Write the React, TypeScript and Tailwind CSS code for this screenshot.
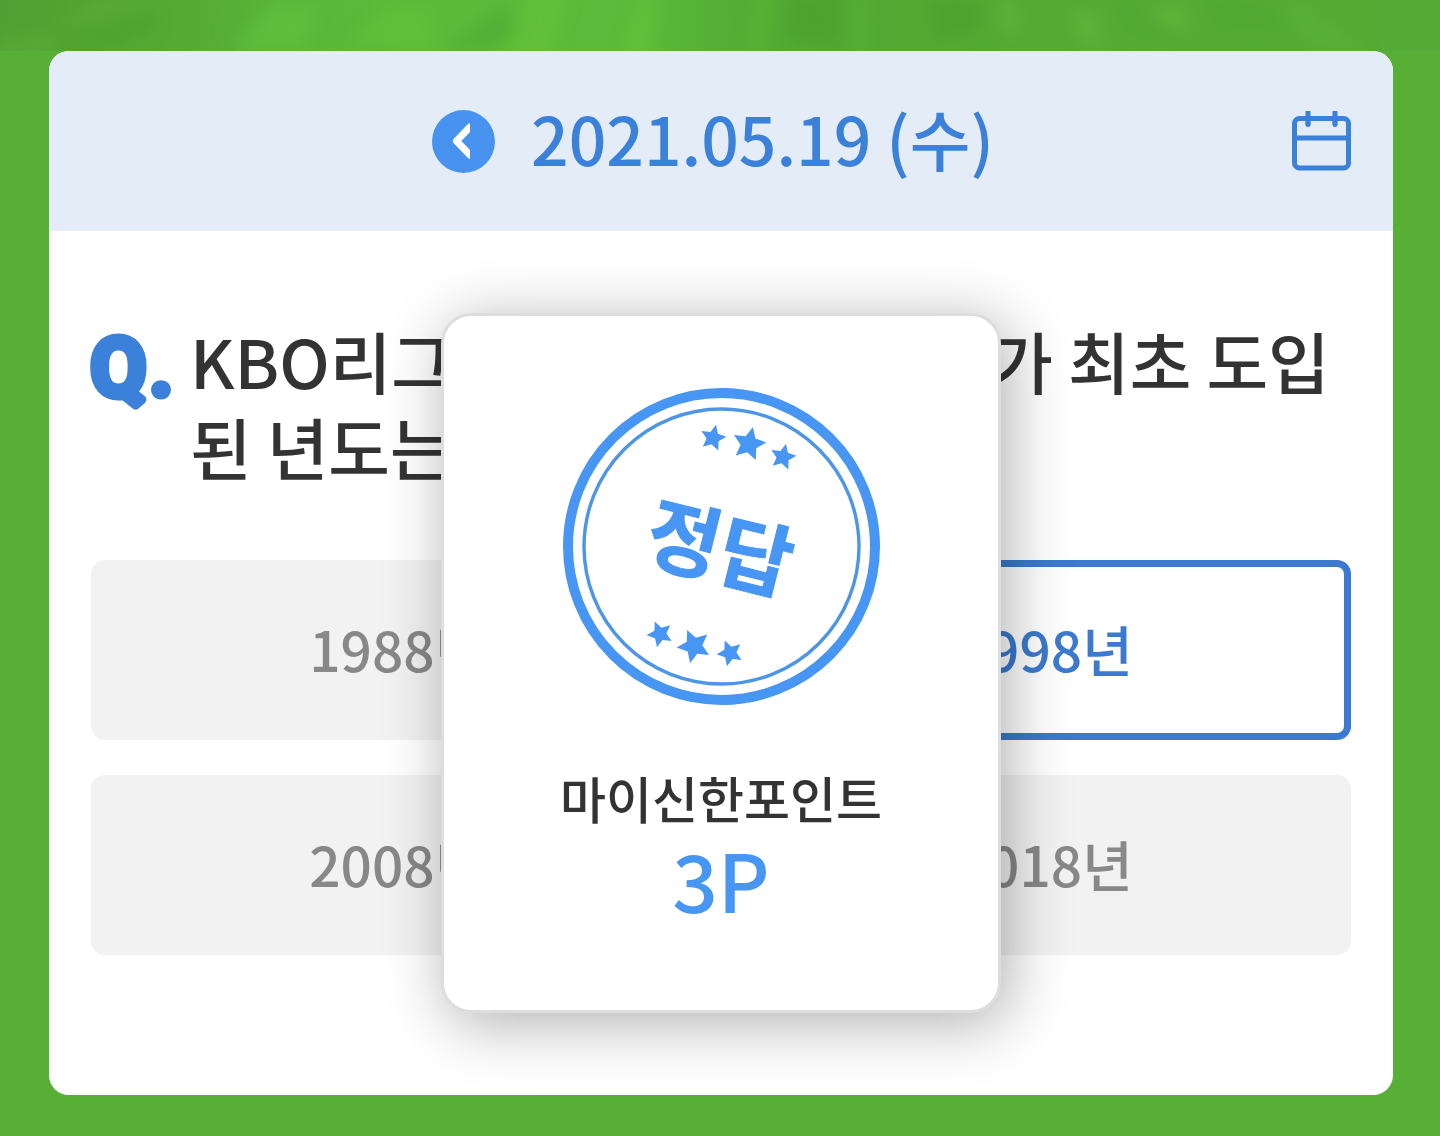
import { useState } from "react"

const options = ["1988년", "1998년", "2008년", "2018년"]

const starPoints = Array.from({ length: 10 }, (_, i) => {
  const r = i % 2 === 0 ? 1 : 0.48
  const a = (Math.PI / 5) * i - Math.PI / 2
  return `${(r * Math.cos(a)).toFixed(3)},${(r * Math.sin(a)).toFixed(3)}`
}).join(" ")

const stars = [
  { x: 150, y: 50, r: 13.5, angle: 13 },
  { x: 186, y: 56, r: 17.5, angle: 13 },
  { x: 220, y: 69, r: 13.5, angle: 13 },
  { x: 97, y: 246, r: 13.5, angle: 193 },
  { x: 131, y: 258, r: 17.5, angle: 193 },
  { x: 167, y: 265, r: 13.5, angle: 193 },
]

function GrassBackdrop() {
  return (
    <svg className="block h-[51px] w-full" viewBox="0 0 1440 51" preserveAspectRatio="none" aria-hidden="true">
      <defs>
        <linearGradient id="grass" x1="0" x2="1" y1="0" y2="0">
          <stop offset="0" stopColor="#4fa032" />
          <stop offset="0.12" stopColor="#54aa33" />
          <stop offset="0.2" stopColor="#5ab638" />
          <stop offset="0.3" stopColor="#5cba39" />
          <stop offset="0.44" stopColor="#5dba3a" />
          <stop offset="0.5" stopColor="#54af34" />
          <stop offset="0.58" stopColor="#50a832" />
          <stop offset="0.76" stopColor="#54ac34" />
          <stop offset="0.9" stopColor="#54ac34" />
          <stop offset="1" stopColor="#54aa35" />
        </linearGradient>
        <filter id="soft" x="-20%" y="-50%" width="140%" height="200%">
          <feGaussianBlur stdDeviation="8" />
        </filter>
      </defs>
      <rect width="1440" height="51" fill="url(#grass)" />
      <g filter="url(#soft)" opacity="0.85">
        <path d="M-10 60 L0 40 L50 35 L60 55 Z M50 30 L100 0 L150 5 L90 20 Z" fill="#5cab37" />
        <path d="M85 30 L150 10 L160 25 L90 51 Z" fill="#4da332" />
        <path d="M235 51 L270 5 L320 5 L300 51 Z" fill="#61bf3c" />
        <path d="M350 45 L385 5 L435 10 L430 55 Z" fill="#61bf3b" />
        <path d="M225 30 L245 0 L255 0 L228 40 Z M440 51 L500 5 L520 20 L500 51 Z" fill="#53af34" />
        <path d="M505 60 L525 -5 L570 -5 L550 60 Z M620 60 L640 -5 L655 -5 L650 60 Z" fill="#64c03b" />
        <path d="M745 60 L755 -5 L770 -5 L765 60 Z M852 60 L850 -5 L864 -5 L866 60 Z" fill="#59b335" />
        <path d="M785 40 L790 -5 L840 -5 L845 40 Z M935 40 L930 0 L980 0 L980 30 Z" fill="#4ba22f" />
        <path d="M1000 0 L1015 0 L1020 35 L1000 30 Z M1070 10 L1095 15 L1102 48 L1080 40 Z M1145 10 L1185 5 L1190 30 L1170 30 Z" fill="#61b437" />
        <path d="M1110 0 L1130 0 L1180 40 L1130 35 Z M1200 0 L1270 5 L1290 30 L1220 30 Z" fill="#4fa832" />
        <path d="M1280 10 L1300 5 L1370 51 L1320 51 Z" fill="#58b138" />
      </g>
    </svg>
  )
}

function CalendarIcon() {
  return (
    <svg className="block h-[60px] w-[60px]" viewBox="-1 0 60 60" fill="none" stroke="#3b80d9" strokeWidth="5" aria-hidden="true">
      <rect x="2.5" y="7.5" width="54" height="49.5" rx="5" />
      <path d="M2.5 27 H56.5" />
      <path d="M16 0 V13.5 M43 0 V13.5" />
      <path d="M16 12 V13.5 M43 12 V13.5" strokeLinecap="round" />
    </svg>
  )
}

function PrevIcon() {
  return (
    <svg className="block h-[63px] w-[63px]" viewBox="0 0 63 63" aria-hidden="true">
      <defs>
        <clipPath id="prevClip">
          <rect width="38" height="63" />
        </clipPath>
      </defs>
      <circle cx="31.5" cy="31.5" r="31.5" fill="#4793ef" />
      <path d="M38 17 L24.5 31 L38 45" fill="none" stroke="#fff" strokeWidth="7" strokeLinejoin="round" strokeLinecap="round" clipPath="url(#prevClip)" />
    </svg>
  )
}

function QuestionMark() {
  return (
    <svg className="mt-3 block h-[100px] w-[99px] shrink-0 overflow-visible" viewBox="0 0 99 100" role="img" aria-label="Q.">
      <text
        x="0"
        y="66"
        fill="#3b80d9"
        stroke="#3b80d9"
        strokeWidth="9"
        strokeLinejoin="round"
        className="font-['Roboto',sans-serif] text-[80px] font-medium"
      >
        Q
        <tspan dx="4">.</tspan>
      </text>
    </svg>
  )
}

function Stamp() {
  return (
    <svg className="block h-[317px] w-[317px]" viewBox="0 0 317 317" role="img" aria-label="정답">
      <circle cx="158.5" cy="158.5" r="153.5" fill="none" stroke="#4896f3" strokeWidth="10" />
      <circle cx="158.5" cy="158.5" r="137.5" fill="none" stroke="#4d95e6" strokeWidth="3.4" />
      {stars.map((s) => (
        <polygon
          key={`${s.x}-${s.y}`}
          points={starPoints}
          fill="#4896f3"
          transform={`translate(${s.x} ${s.y}) rotate(${s.angle}) scale(${s.r})`}
        />
      ))}
      <text
        x="157"
        y="190"
        textAnchor="middle"
        transform="rotate(14 157 160)"
        fill="#4896f3"
        stroke="#4896f3"
        strokeWidth="1"
        className="font-['Noto_Sans_CJK_KR',sans-serif] text-[80px] font-bold"
      >
        정답
      </text>
    </svg>
  )
}

export default function App() {
  const [selected, setSelected] = useState("1998년")

  return (
    <div className="min-h-screen bg-[#58af36] font-['Noto_Sans_CJK_KR',sans-serif] font-medium">
      <GrassBackdrop />
      <main className="relative mr-[47px] ml-[49px] overflow-hidden rounded-[20px] bg-white">
        <header className="grid h-[180px] grid-cols-[1fr_auto_1fr] items-center bg-[#e4ecf8] px-[42px]">
          <div className="col-start-2 flex items-center gap-9 pr-4">
            <button type="button" aria-label="이전 날짜">
              <PrevIcon />
            </button>
            <h1 className="pb-2 text-[66px] leading-[100px] text-[#3b80d9]">2021.05.19 (수)</h1>
          </div>
          <button type="button" aria-label="달력" className="justify-self-end">
            <CalendarIcon />
          </button>
        </header>

        <section className="px-[42px] pt-[86px] pb-[140px]">
          <div className="flex">
            <QuestionMark />
            <h2 className="text-[67px] leading-[86px] break-all text-[#333]">
              KBO리그에 외국인 선수 제도가 최초 도입된 년도는?
            </h2>
          </div>
          <div className="mt-[71px] grid grid-cols-2 gap-[35px]">
            {options.map((option) => (
              <button
                key={option}
                type="button"
                aria-pressed={selected === option}
                onClick={() => setSelected(option)}
                className={
                  selected === option
                    ? "h-[180px] rounded-[14px] border-[7px] border-[#3b7ad0] bg-white pb-1 text-[55px] text-[#3b7ad0]"
                    : "h-[180px] rounded-[14px] bg-[#f2f2f2] pb-1 text-[55px] text-[#888]"
                }
              >
                {option}
              </button>
            ))}
          </div>
        </section>

        <div
          role="dialog"
          aria-label="정답"
          className="absolute top-[262px] left-1/2 flex w-[560px] -translate-x-1/2 flex-col items-center rounded-[30px] border-[3px] border-[#ddd] bg-white pt-[72px] pb-[86px] shadow-[7px_10px_63px_rgba(0,0,0,0.32)]"
        >
          <Stamp />
          <p className="mt-[56px] text-[50px] leading-[72px] text-[#333]">마이신한포인트</p>
          <p className="text-[80px] leading-[91px] text-[#4896f3]">3P</p>
        </div>
      </main>
    </div>
  )
}
